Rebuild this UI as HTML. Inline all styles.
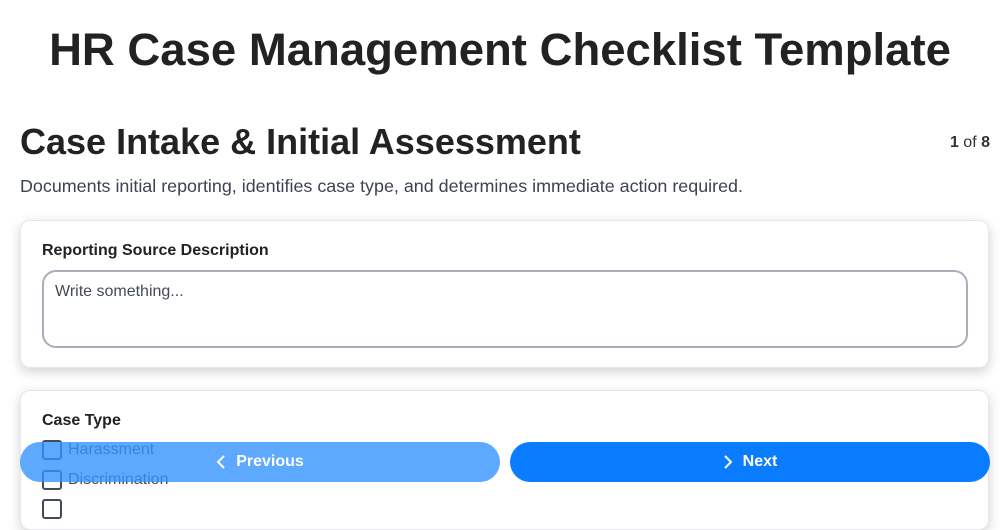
<!DOCTYPE html>
<html><head><style>
*{box-sizing:border-box;margin:0;padding:0}
body{width:1000px;height:500px;overflow:hidden;background:#fff;font-family:"Liberation Sans",sans-serif;color:#222;position:relative}
h1{position:absolute;top:24px;left:0;width:1000px;text-align:center;font-size:45.5px;font-weight:bold;color:#222}
h2{position:absolute;top:121px;left:20px;font-size:36px;font-weight:bold;color:#222}
.pg{position:absolute;top:134px;right:10px;font-size:16px;color:#333}
.desc{position:absolute;top:176px;left:20px;font-size:17.9px;color:#3c4250}
.card{position:absolute;left:20px;width:969px;background:#fff;border:1px solid #e6e7eb;border-radius:10px;box-shadow:0 4px 12px rgba(0,0,0,.18)}
.lbl{position:absolute;left:21px;font-size:16px;font-weight:bold;color:#222}
.ta{position:absolute;left:21px;top:49px;width:926px;height:78px;border:2px solid #a9afb8;border-radius:14px;padding:11px 11px;font-size:16px;color:#444b57}
.cb{position:absolute;left:21px;width:20px;height:20px;border:2px solid #444b57;border-radius:3px}
.ct{position:absolute;left:47px;font-size:16px;color:#444b57}
.btn{position:absolute;top:442px;height:40px;border-radius:20px;color:#fff;font-weight:bold;font-size:16px;display:flex;align-items:center;justify-content:center;gap:10px}
</style></head><body>
<h1>HR Case Management Checklist Template</h1>
<h2>Case Intake &amp; Initial Assessment</h2>
<div class="pg"><b>1</b> of <b>8</b></div>
<div class="desc">Documents initial reporting, identifies case type, and determines immediate action required.</div>
<div class="card" style="top:220px;height:148px">
<div class="lbl" style="top:21px">Reporting Source Description</div>
<div class="ta">Write something...</div>
</div>
<div class="card" style="top:390px;height:140px">
<div class="lbl" style="top:21px">Case Type</div>
<div class="cb" style="top:49px"></div><div class="ct" style="top:50px">Harassment</div>
<div class="cb" style="top:79px"></div><div class="ct" style="top:80px">Discrimination</div>
<div class="cb" style="top:108px"></div>
</div>
<div class="btn" style="left:20px;width:480px;background:rgba(51,148,255,.8)"><svg width="10" height="16" viewBox="0 0 10 16"><path d="M8 2L2 8l6 6" fill="none" stroke="#fff" stroke-width="2"/></svg>Previous</div>
<div class="btn" style="left:510px;width:480px;background:#0a7cff"><svg width="10" height="16" viewBox="0 0 10 16"><path d="M2 2l6 6-6 6" fill="none" stroke="#fff" stroke-width="2"/></svg>Next</div>
</body></html>
